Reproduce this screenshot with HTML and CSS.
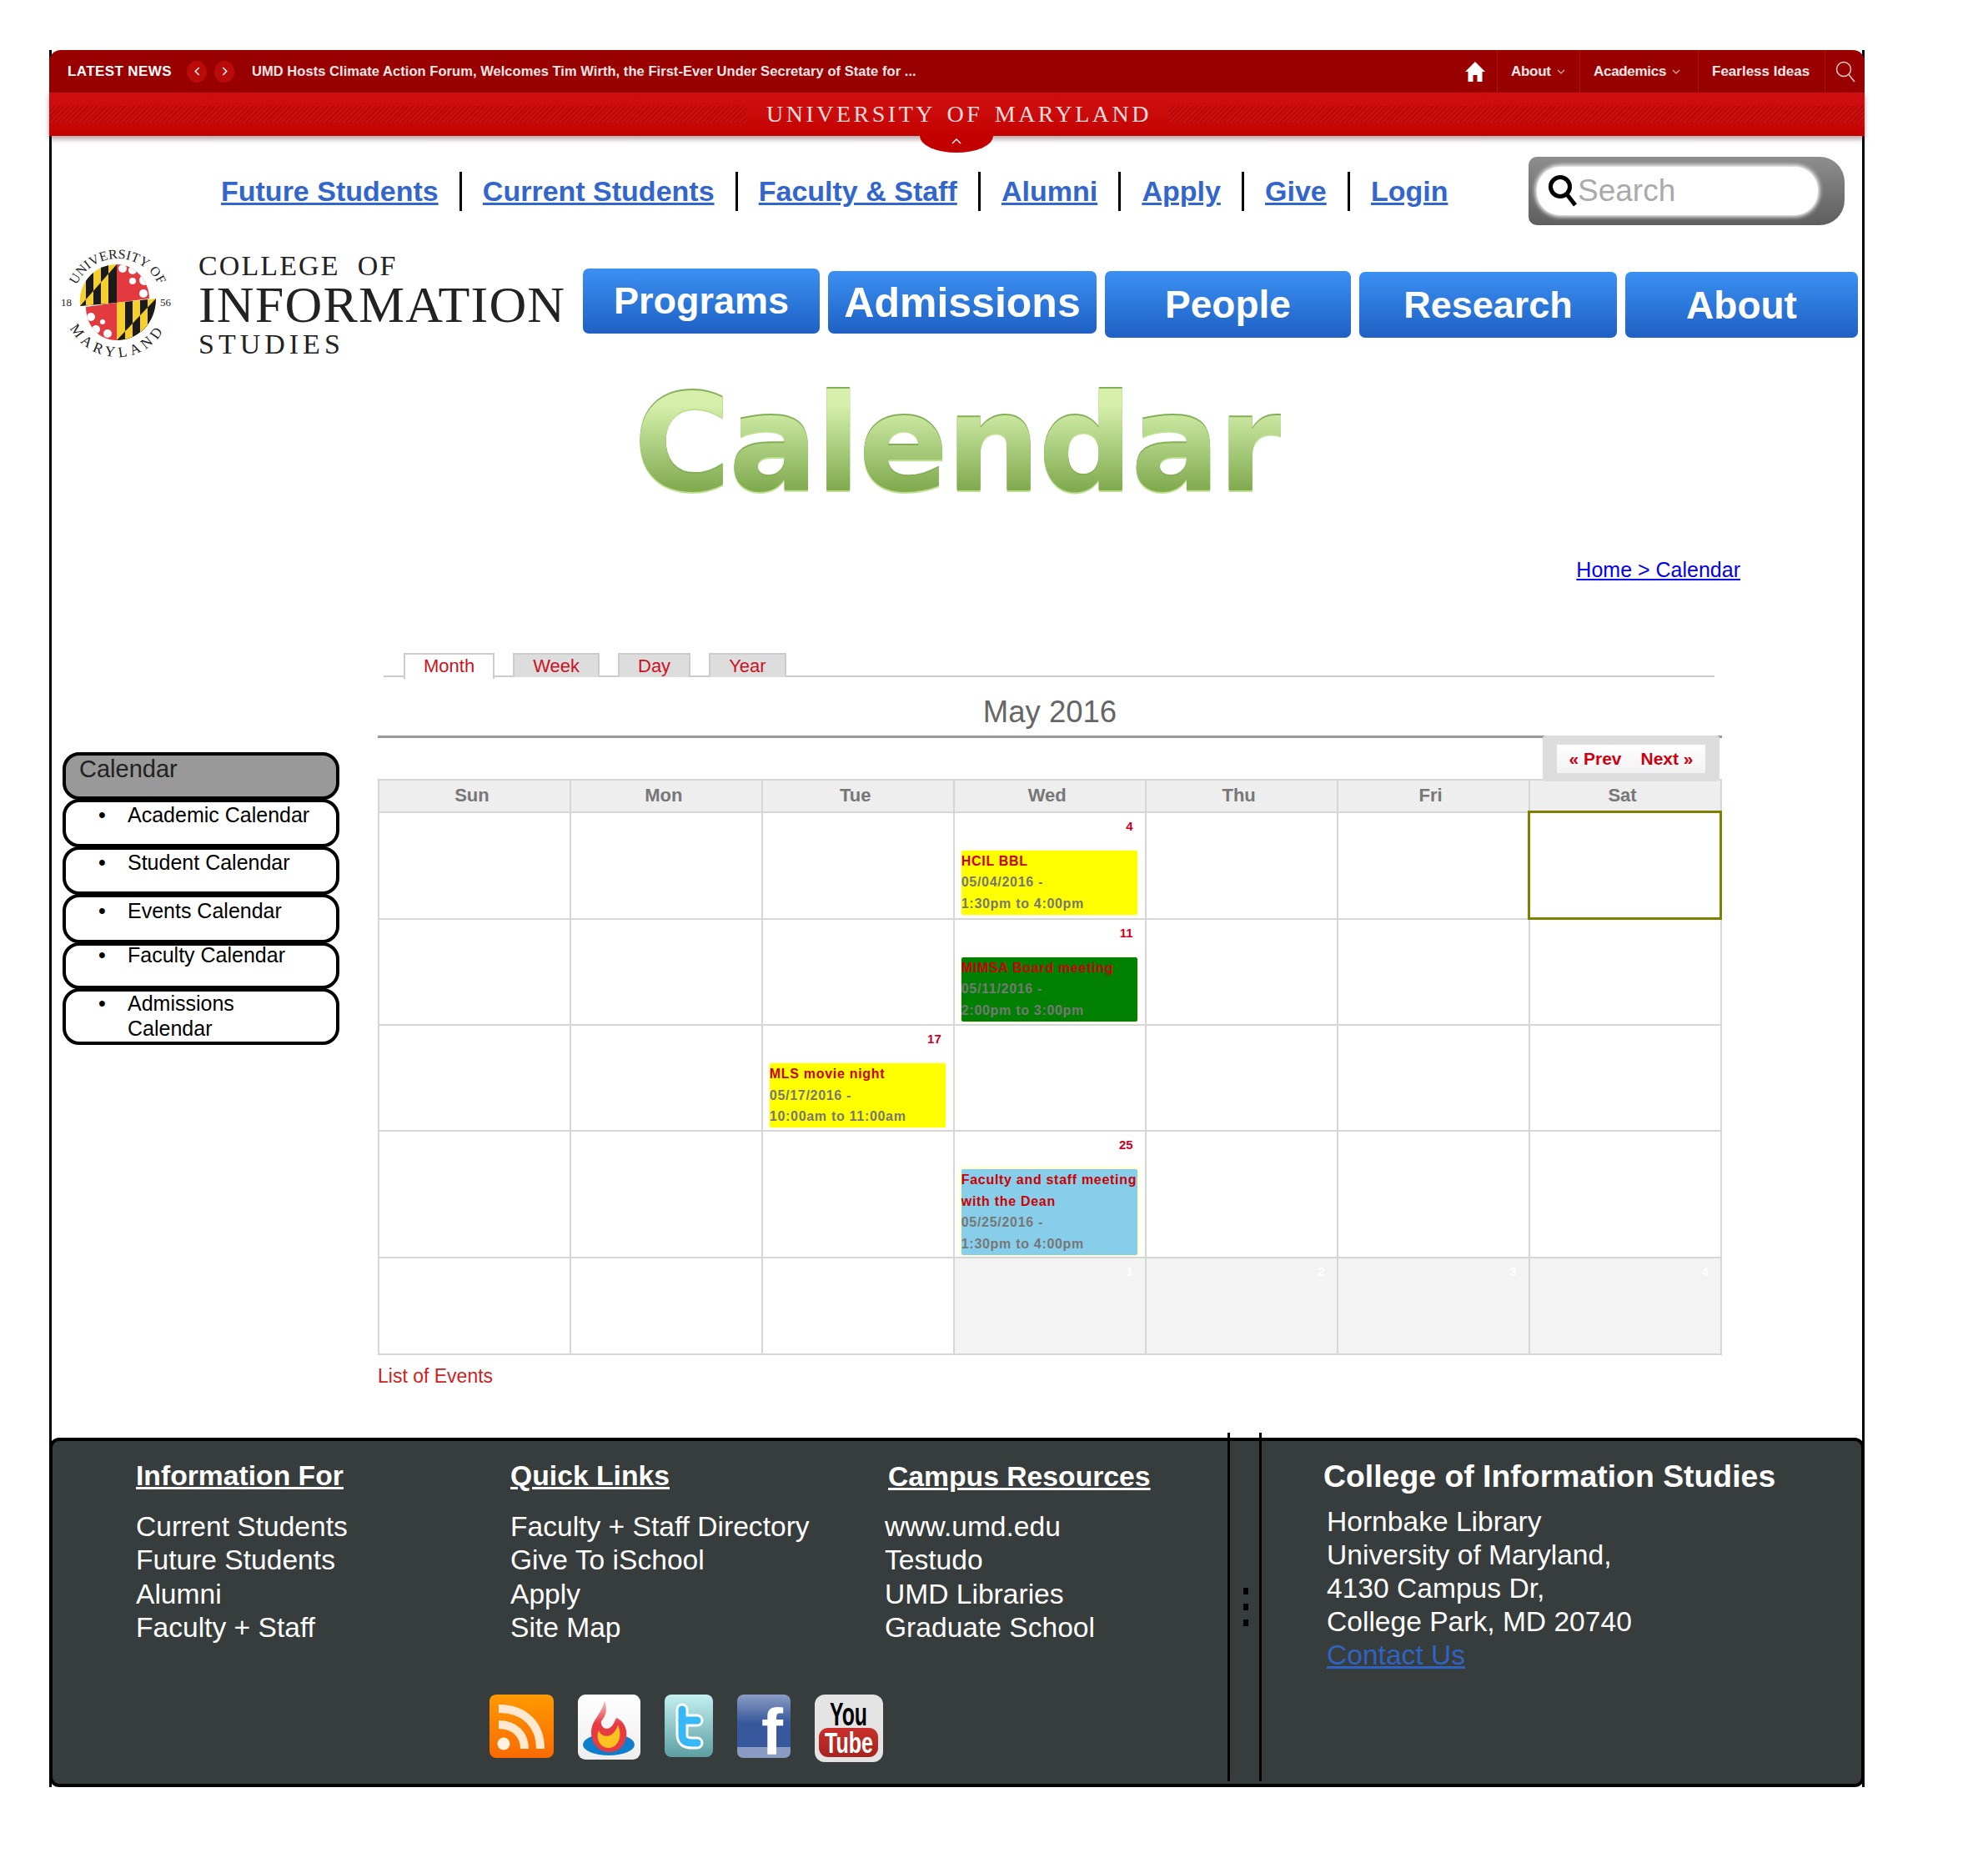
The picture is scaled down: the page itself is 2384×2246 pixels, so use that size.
FILE: index.html
```html
<!DOCTYPE html>
<html lang="en">
<head>
    <meta charset="UTF-8">
    <meta name="viewport" content="width=device-width, initial-scale=1.0">
    <title>Calendar - College of Information Studies</title>
    <link rel="stylesheet" href="styles.css">
</head>
<body>
    <div class="page">
        <div class="umd-header">
            <div class="topbar">
                <span class="news-label">LATEST NEWS</span>
                <span class="news-arrow">
                    <svg viewBox="0 0 10 14" width="9" height="13"><path d="M7.5 2 L2.5 7 L7.5 12" fill="none" stroke="#fff" stroke-width="1.6"/></svg>
                </span>
                <span class="news-arrow">
                    <svg viewBox="0 0 10 14" width="9" height="13"><path d="M2.5 2 L7.5 7 L2.5 12" fill="none" stroke="#fff" stroke-width="1.6"/></svg>
                </span>
                <span class="news-text">UMD Hosts Climate Action Forum, Welcomes Tim Wirth, the First-Ever Under Secretary of State for ...</span>
                <div class="top-nav">
                    <span class="top-home">
                        <svg viewBox="0 0 24 24" width="24" height="24"><path d="M12 0 L24 12 L20.5 12 L20.5 24 L14.5 24 L14.5 16 L9.5 16 L9.5 24 L3.5 24 L3.5 12 L0 12 Z" fill="#fff"/></svg>
                    </span>
                    <span class="top-item top-about">About
                        <svg viewBox="0 0 10 6" width="10" height="6"><path d="M1 1 L5 5 L9 1" fill="none" stroke="#e8b0b0" stroke-width="1.2"/></svg>
                    </span>
                    <span class="top-item top-academics">Academics
                        <svg viewBox="0 0 10 6" width="10" height="6"><path d="M1 1 L5 5 L9 1" fill="none" stroke="#e8b0b0" stroke-width="1.2"/></svg>
                    </span>
                    <span class="top-item top-fearless">Fearless Ideas</span>
                    <span class="top-item top-search">
                        <svg viewBox="0 0 24 26" width="24" height="26"><circle cx="10" cy="10" r="8.5" fill="none" stroke="#f0c8c8" stroke-width="1.5"/><path d="M16 16.5 L23 25" stroke="#f0c8c8" stroke-width="1.5"/></svg>
                    </span>
                </div>
            </div>
            <div class="band">
                <div class="stripes"></div>
                <div class="band-title">UNIVERSITY OF MARYLAND</div>
                <div class="stripes"></div>
            </div>
            <div class="band-tab">
                <svg viewBox="0 0 12 7" width="12" height="7"><path d="M1 6 L6 1 L11 6" fill="none" stroke="#fff" stroke-width="1.4"/></svg>
            </div>
        </div>

        <div class="link-row">
            <a href="#">Future Students</a>
            <a href="#">Current Students</a>
            <a href="#">Faculty &amp; Staff</a>
            <a href="#">Alumni</a>
            <a href="#">Apply</a>
            <a href="#">Give</a>
            <a href="#">Login</a>
            <div class="search-box">
                <div class="search-inner">
                    <svg viewBox="0 0 36 40" width="36" height="40"><circle cx="15" cy="15" r="11.5" fill="none" stroke="#000" stroke-width="5"/><path d="M23 24 L33 37" stroke="#000" stroke-width="5"/></svg>
                    <span class="search-hint">Search</span>
                </div>
            </div>
        </div>

        <div class="brand-row">
            <svg class="seal" viewBox="0 0 137 130" width="137" height="130">
                <defs>
                    <clipPath id="top-left"><path d="M23 69 C20 40 42 19 67 19 L67 65 Z"/></clipPath>
                    <clipPath id="top-right"><path d="M67 19 C90 19 106 40 106 60 L67 65 Z"/></clipPath>
                    <clipPath id="bot-left"><path d="M30 70 L67 65 L67 110 C45 110 30 92 30 70 Z"/></clipPath>
                    <clipPath id="bot-right"><path d="M67 65 L114 60 C114 90 92 110 67 110 Z"/></clipPath>
                    <clipPath id="top-diag"><path d="M23 69 L67 19 L67 69 Z"/></clipPath>
                    <clipPath id="bot-diag"><path d="M67 110 L114 60 L114 110 Z"/></clipPath>
                    <path id="arc-top" d="M14 66 A54 54 0 0 1 122 66"/>
                    <path id="arc-bot" d="M4 66 A64 64 0 0 0 132 66"/>
                </defs>
                <g clip-path="url(#top-left)">
                    <rect x="20" y="15" width="50" height="60" fill="#f6cf2e"/>
                    <rect x="30" y="15" width="9" height="60" fill="#1b1b1b"/>
                    <rect x="48" y="15" width="9" height="60" fill="#1b1b1b"/>
                    <g clip-path="url(#top-diag)">
                        <rect x="20" y="15" width="50" height="60" fill="#1b1b1b"/>
                        <rect x="30" y="15" width="9" height="60" fill="#f6cf2e"/>
                        <rect x="48" y="15" width="9" height="60" fill="#f6cf2e"/>
                    </g>
                </g>
                <g clip-path="url(#top-right)">
                    <rect x="67" y="15" width="42" height="55" fill="#e23a3f"/>
                    <circle cx="74" cy="24" r="5" fill="#fff"/><circle cx="86" cy="26" r="5" fill="#fff"/>
                    <circle cx="100" cy="38" r="6" fill="#fff"/><circle cx="86" cy="39" r="4" fill="#fff"/>
                    <circle cx="99" cy="54" r="5" fill="#fff"/>
                </g>
                <g clip-path="url(#bot-left)">
                    <rect x="28" y="60" width="40" height="55" fill="#e23a3f"/>
                    <circle cx="36" cy="82" r="5" fill="#fff"/><circle cx="42" cy="97" r="5" fill="#fff"/>
                    <circle cx="56" cy="102" r="5" fill="#fff"/><circle cx="50" cy="88" r="3" fill="#fff"/>
                </g>
                <g clip-path="url(#bot-right)">
                    <rect x="67" y="58" width="50" height="55" fill="#f6cf2e"/>
                    <rect x="77" y="58" width="9" height="55" fill="#1b1b1b"/>
                    <rect x="95" y="58" width="9" height="55" fill="#1b1b1b"/>
                    <g clip-path="url(#bot-diag)">
                        <rect x="67" y="58" width="50" height="55" fill="#1b1b1b"/>
                        <rect x="77" y="58" width="9" height="55" fill="#f6cf2e"/>
                        <rect x="95" y="58" width="9" height="55" fill="#f6cf2e"/>
                    </g>
                </g>
                <text class="seal-text"><textPath href="#arc-top" startOffset="50%" text-anchor="middle">UNIVERSITY OF</textPath></text>
                <text class="seal-text seal-bottom"><textPath href="#arc-bot" startOffset="50%" text-anchor="middle">MARYLAND</textPath></text>
                <text class="seal-year" x="0" y="69">18</text>
                <text class="seal-year" x="119" y="69">56</text>
            </svg>
            <div class="brand-name">
                <div class="brand-small">COLLEGE&nbsp; OF</div>
                <div class="brand-large">INFORMATION</div>
                <div class="brand-small brand-last">STUDIES</div>
            </div>
            <div class="main-nav">
                <a class="nav-btn nav-programs" href="#">Programs</a>
                <a class="nav-btn nav-admissions" href="#">Admissions</a>
                <a class="nav-btn nav-people" href="#">People</a>
                <a class="nav-btn nav-research" href="#">Research</a>
                <a class="nav-btn nav-about" href="#">About</a>
            </div>
        </div>

        <h1 class="page-title"><span>Calendar</span></h1>
        <div class="breadcrumb"><a href="#">Home &gt; Calendar</a></div>

        <div class="content">
            <div class="sidebar">
                <div class="side-head">Calendar</div>
                <div class="side-item side-1"><ul><li>Academic Calendar</li></ul></div>
                <div class="side-item side-2"><ul><li>Student Calendar</li></ul></div>
                <div class="side-item side-3"><ul><li>Events Calendar</li></ul></div>
                <div class="side-item side-4"><ul><li>Faculty Calendar</li></ul></div>
                <div class="side-item side-5"><ul><li>Admissions Calendar</li></ul></div>
            </div>

            <div class="calendar">
                <div class="tabs">
                    <a class="tab active" href="#">Month</a>
                    <a class="tab" href="#">Week</a>
                    <a class="tab" href="#">Day</a>
                    <a class="tab" href="#">Year</a>
                </div>
                <h2 class="month-title">May 2016</h2>
                <div class="pager">
                    <div class="pager-inner"><a href="#">&laquo; Prev</a><a href="#">Next &raquo;</a></div>
                </div>
                <table class="cal-table">
                    <thead>
                        <tr><th>Sun</th><th>Mon</th><th>Tue</th><th>Wed</th><th>Thu</th><th>Fri</th><th>Sat</th></tr>
                    </thead>
                    <tbody>
                        <tr class="row-std">
                            <td></td><td></td><td></td>
                            <td>
                                <div class="day-num">4</div>
                                <div class="event ev-yellow">
                                    <div class="ev-title">HCIL BBL</div>
                                    <div>05/04/2016 -</div>
                                    <div>1:30pm to 4:00pm</div>
                                </div>
                            </td>
                            <td></td><td></td><td class="today"></td>
                        </tr>
                        <tr class="row-std">
                            <td></td><td></td><td></td>
                            <td>
                                <div class="day-num">11</div>
                                <div class="event ev-green">
                                    <div class="ev-title">MIMSA Board meeting</div>
                                    <div>05/11/2016 -</div>
                                    <div>2:00pm to 3:00pm</div>
                                </div>
                            </td>
                            <td></td><td></td><td></td>
                        </tr>
                        <tr class="row-std">
                            <td></td><td></td>
                            <td>
                                <div class="day-num">17</div>
                                <div class="event ev-yellow">
                                    <div class="ev-title">MLS movie night</div>
                                    <div>05/17/2016 -</div>
                                    <div>10:00am to 11:00am</div>
                                </div>
                            </td>
                            <td></td><td></td><td></td><td></td>
                        </tr>
                        <tr class="row-tall">
                            <td></td><td></td><td></td>
                            <td>
                                <div class="day-num">25</div>
                                <div class="event ev-blue">
                                    <div class="ev-title">Faculty and staff meeting with the Dean</div>
                                    <div>05/25/2016 -</div>
                                    <div>1:30pm to 4:00pm</div>
                                </div>
                            </td>
                            <td></td><td></td><td></td>
                        </tr>
                        <tr class="row-last">
                            <td></td><td></td><td></td>
                            <td class="other"><div class="day-num">1</div></td>
                            <td class="other"><div class="day-num">2</div></td>
                            <td class="other"><div class="day-num">3</div></td>
                            <td class="other"><div class="day-num">4</div></td>
                        </tr>
                    </tbody>
                </table>
                <a class="list-events" href="#">List of Events</a>
            </div>
        </div>

        <div class="footer">
            <div class="foot-left">
                <div class="foot-cols">
                    <div class="foot-col col-info">
                        <h3>Information For</h3>
                        <div>Current Students</div>
                        <div>Future Students</div>
                        <div>Alumni</div>
                        <div>Faculty + Staff</div>
                    </div>
                    <div class="foot-col col-quick">
                        <h3>Quick Links</h3>
                        <div>Faculty + Staff Directory</div>
                        <div>Give To iSchool</div>
                        <div>Apply</div>
                        <div>Site Map</div>
                    </div>
                    <div class="foot-col col-campus">
                        <h3>Campus Resources</h3>
                        <div>www.umd.edu</div>
                        <div>Testudo</div>
                        <div>UMD Libraries</div>
                        <div>Graduate School</div>
                    </div>
                </div>
                <div class="social">
                    <svg viewBox="0 0 77 76" width="77" height="76">
                        <defs><linearGradient id="rss-bg" x1="0" y1="0" x2="0" y2="1"><stop offset="0" stop-color="#ff9a00"/><stop offset="1" stop-color="#fb6a00"/></linearGradient></defs>
                        <rect width="77" height="76" rx="8" fill="url(#rss-bg)"/>
                        <circle cx="17" cy="59" r="7.5" fill="#fff2e0"/>
                        <path d="M11 36 C30 36 42 48 42 65" fill="none" stroke="#ffe8d0" stroke-width="10"/>
                        <path d="M11 17 C43 17 61 37 61 65" fill="none" stroke="#ffe8d0" stroke-width="10"/>
                    </svg>
                    <svg viewBox="0 0 75 78" width="75" height="78">
                        <defs>
                            <linearGradient id="fb-bg" x1="0" y1="0" x2="0" y2="1"><stop offset="0" stop-color="#fff"/><stop offset="1" stop-color="#eee"/></linearGradient>
                            <linearGradient id="flame" x1="0" y1="0" x2="0" y2="1"><stop offset="0" stop-color="#f6c0c0"/><stop offset=".45" stop-color="#e83a42"/></linearGradient>
                        </defs>
                        <rect width="75" height="78" rx="9" fill="url(#fb-bg)"/>
                        <ellipse cx="37" cy="60" rx="31" ry="13" fill="#0d7ecb"/>
                        <path d="M32 7 C36 20 33 26 28 32 C27 36 30 41 35 41 C41 40 43 35 46 28 C56 32 61 44 57 55 C53 66 44 70 36 69 C24 68 16 58 16 46 C16 30 29 24 32 7 Z" fill="url(#flame)"/>
                        <path d="M25 43 C28 52 42 54 48 37 C53 46 51 63 37 64 C26 64 21 52 25 43 Z" fill="#fcc21f"/>
                    </svg>
                    <svg viewBox="0 0 58 77" width="58" height="77">
                        <defs><linearGradient id="tw-bg" x1="0" y1="0" x2="0" y2="1"><stop offset="0" stop-color="#c4f0f0"/><stop offset="1" stop-color="#5d9fa3"/></linearGradient></defs>
                        <rect width="58" height="75" rx="8" fill="url(#tw-bg)"/>
                        <path d="M21 18 L21 48 C21 56 26 58 33 58 L39 58" fill="none" stroke="#fff" stroke-width="15" stroke-linecap="round"/>
                        <path d="M21 31 L39 31" fill="none" stroke="#fff" stroke-width="15" stroke-linecap="round"/>
                        <path d="M21 18 L21 48 C21 56 26 58 33 58 L39 58" fill="none" stroke="#35b8f5" stroke-width="9" stroke-linecap="round"/>
                        <path d="M21 31 L39 31" fill="none" stroke="#35b8f5" stroke-width="9" stroke-linecap="round"/>
                    </svg>
                    <svg viewBox="0 0 64 76" width="64" height="76">
                        <defs><linearGradient id="fa-bg" x1="0" y1="0" x2="0" y2="1"><stop offset="0" stop-color="#8b9cc4"/><stop offset=".45" stop-color="#37589c"/><stop offset="1" stop-color="#37589c"/></linearGradient></defs>
                        <rect width="64" height="76" rx="8" fill="url(#fa-bg)"/>
                        <path d="M0 63 L64 63 L64 68 Q64 76 56 76 L8 76 Q0 76 0 68 Z" fill="#8b9cc4"/>
                        <text class="fb-letter" x="29" y="72">f</text>
                    </svg>
                    <svg viewBox="0 0 82 81" width="82" height="81">
                        <defs><linearGradient id="yt-red" x1="0" y1="0" x2="0" y2="1"><stop offset="0" stop-color="#c9302b"/><stop offset="1" stop-color="#a5241f"/></linearGradient></defs>
                        <rect width="82" height="81" rx="12" fill="#e4e4e4"/>
                        <text class="yt-you" x="18" y="37" textLength="45" lengthAdjust="spacingAndGlyphs">You</text>
                        <rect x="5" y="40" width="71" height="35" rx="11" fill="url(#yt-red)"/>
                        <text class="yt-tube" x="12" y="70" textLength="58" lengthAdjust="spacingAndGlyphs">Tube</text>
                    </svg>
                </div>
            </div>
            <div class="foot-right">
                <h3>College of Information Studies</h3>
                <div>Hornbake Library</div>
                <div>University of Maryland,</div>
                <div>4130 Campus Dr,</div>
                <div>College Park, MD 20740</div>
                <a href="#">Contact Us</a>
            </div>
            <div class="splitter splitter-a"></div>
            <div class="splitter splitter-b"></div>
            <div class="splitter-dots"><i></i><i></i><i></i></div>
        </div>
    </div>
</body>
</html>
```

FILE: styles.css
```css
body {
    margin: 0;
    background: #fff;
    font-family: "Liberation Sans", Arial, sans-serif;
    color: #000;
}
svg {
    overflow: visible;
}
.page {
    width: 2171px;
    margin: 60px 0 84px 59px;
    border-left: 3px solid #000;
    border-right: 3px solid #000;
}

/* umd red header */
.umd-header {
    position: relative;
    margin: 0 -3px;
}
.topbar {
    display: flex;
    align-items: center;
    height: 51px;
    padding-left: 22px;
    background: #990000;
    border-radius: 14px 14px 0 0;
    color: #fff;
    font-size: 17px;
}
.news-label {
    font-weight: bold;
    width: 143px;
    letter-spacing: 0.4px;
}
.news-arrow {
    display: flex;
    align-items: center;
    justify-content: center;
    width: 24px;
    height: 26px;
    margin-right: 9px;
    border-radius: 50%;
    background: #bb0a0a;
}
.news-text {
    margin-left: 12px;
    font-weight: bold;
    font-size: 16.5px;
    letter-spacing: 0.05px;
    color: #f6e6e6;
}
.top-nav {
    display: flex;
    align-items: center;
    height: 100%;
    margin-left: auto;
}
.top-home {
    display: flex;
    width: 38px;
}
.top-item {
    display: flex;
    align-items: center;
    gap: 7px;
    height: 100%;
    padding-left: 16px;
    border-left: 1px solid #ac1515;
    box-sizing: border-box;
    font-weight: bold;
    font-size: 17px;
    letter-spacing: -0.3px;
    color: #f6e6e6;
}
.top-about { width: 99px; }
.top-academics { width: 142px; }
.top-fearless { width: 152px; letter-spacing: 0; }
.top-search { width: 48px; padding-left: 12px; }
.band {
    display: flex;
    align-items: center;
    height: 52px;
    background: linear-gradient(to bottom, #cf0f0f, #cb0b0b 50%, #c20000);
    box-shadow: 0 4px 6px rgba(90, 60, 60, 0.45);
}
.stripes {
    flex: 1;
    height: 20px;
    background: repeating-linear-gradient(135deg, #b80808 0, #b80808 2px, #cc1010 2px, #cc1010 4px);
}
.band-title {
    width: 506px;
    padding-left: 5px;
    box-sizing: border-box;
    text-align: center;
    font-family: "Liberation Serif", "Times New Roman", serif;
    font-size: 28px;
    letter-spacing: 3.5px;
    word-spacing: 4px;
    color: #f8dcdc;
}
.band-tab {
    position: absolute;
    left: 1044px;
    top: 103px;
    display: flex;
    justify-content: center;
    width: 88px;
    height: 20px;
    padding-top: 3px;
    box-sizing: border-box;
    background: #c20000;
    border-radius: 0 0 50% 50% / 0 0 100% 100%;
}

/* link row */
.link-row {
    display: flex;
    align-items: center;
    height: 82px;
    padding: 25px 21px 0 203px;
}
.link-row a {
    font-size: 34px;
    font-weight: bold;
    color: #3366cc;
    padding: 0 25.1px;
    line-height: 47px;
    border-left: 3px solid #000;
}
.link-row a:first-child {
    border-left: none;
    padding-left: 0;
}
.search-box {
    display: flex;
    align-items: center;
    width: 379px;
    height: 82px;
    margin-left: auto;
    padding-left: 10px;
    box-sizing: border-box;
    background: linear-gradient(to bottom, #8e8e8e, #5e5e5e);
    border-radius: 10px 30px 30px 10px;
}
.search-inner {
    display: flex;
    align-items: center;
    width: 337px;
    height: 58px;
    padding-left: 13px;
    box-sizing: border-box;
    background: #fff;
    border-radius: 28px;
    box-shadow: 0 0 5px 2px #fff;
}
.search-hint {
    font-size: 37px;
    color: #aaa;
}

/* logo + big buttons */
.brand-row {
    display: flex;
    align-items: flex-start;
    height: 130px;
    margin-top: 28px;
    padding-left: 11px;
}
.seal {
    flex: none;
}
.seal-text {
    font-family: "Liberation Serif", serif;
    font-size: 16px;
    letter-spacing: 0.3px;
    fill: #222;
}
.seal-bottom {
    font-size: 17.5px;
    letter-spacing: 5px;
}
.seal-year {
    font-family: "Liberation Serif", serif;
    font-size: 13px;
    fill: #222;
}
.brand-name {
    width: 461px;
    margin-left: 28px;
    font-family: "Liberation Serif", "Times New Roman", serif;
    color: #222;
}
.brand-small {
    font-size: 34px;
    line-height: 32px;
    margin-top: 5px;
    letter-spacing: 2.1px;
}
.brand-large {
    font-size: 62px;
    line-height: 60px;
    letter-spacing: 1.2px;
}
.brand-last {
    margin-top: 2px;
    letter-spacing: 5px;
}
.main-nav {
    display: flex;
    align-items: flex-start;
    gap: 10px;
}
.nav-btn {
    display: flex;
    align-items: center;
    justify-content: center;
    box-sizing: border-box;
    border-radius: 7px;
    background: linear-gradient(to bottom, #3b90f2, #1f60c4);
    color: #fff;
    font-weight: bold;
    font-size: 46px;
    text-decoration: none;
}
.nav-programs { width: 284px; height: 78px; margin-top: 24px; font-size: 45px; }
.nav-admissions { width: 322px; height: 75px; margin-top: 27px; font-size: 50px; }
.nav-people { width: 295px; height: 80px; margin-top: 27px; }
.nav-research { width: 309px; height: 79px; margin-top: 28px; font-size: 45px; }
.nav-about { width: 279px; height: 79px; margin-top: 28px; }

/* page title */
.page-title {
    margin: 10px 0 0;
    text-align: center;
    font-family: "DejaVu Sans", sans-serif;
    font-size: 160px;
    line-height: 190px;
    font-weight: bold;
    letter-spacing: -3.5px;
}
.page-title span {
    display: inline-block;
    background: linear-gradient(to bottom, #d6efab 25%, #b4d68a 45%, #82ab50 78%);
    -webkit-background-clip: text;
    background-clip: text;
    color: transparent;
    filter: drop-shadow(0 -2px 0 #84b055) drop-shadow(0 2px 0 #bde08f);
}
.breadcrumb {
    margin-top: 40px;
    padding-right: 146px;
    text-align: right;
    font-size: 25px;
    line-height: 30px;
}
.breadcrumb a {
    color: #0000ee;
}

/* sidebar + calendar */
.content {
    display: flex;
    align-items: flex-start;
    margin-top: 85px;
    padding: 0 0 59px 13px;
}
.sidebar {
    width: 332px;
    margin-top: 119px;
    margin-right: 46px;
}
.side-head {
    height: 57px;
    padding: 0 0 0 16px;
    box-sizing: border-box;
    background: #999;
    border: 4px solid #000;
    border-radius: 20px;
    font-size: 29px;
    line-height: 32px;
    color: #222;
}
.side-item {
    box-sizing: border-box;
    background: #fff;
    border: 4px solid #000;
    border-radius: 20px;
    font-size: 25px;
    line-height: 30px;
    margin-top: -1px;
}
.side-item ul {
    margin: 0;
    padding: 0 28px 0 74px;
    list-style: none;
}
.side-item li::before {
    content: "\2022";
    display: inline-block;
    width: 30px;
    margin-left: -35px;
    margin-right: 5px;
}
.side-1 { height: 58px; }
.side-2 { height: 58px; }
.side-3 { height: 59px; }
.side-4 { height: 56px; }
.side-5 { height: 68px; }
.side-3 ul { padding-top: 1px; }
.side-4 ul { margin-top: -4px; }
.side-5 ul { margin-top: -1px; }

.calendar {
    position: relative;
    width: 1612px;
}
.tabs {
    display: flex;
    gap: 22px;
    height: 29px;
    width: 1596px;
    padding-left: 24px;
    box-sizing: border-box;
    margin-left: 7px;
    border-bottom: 2px solid #ccc;
}
.tab {
    height: 27px;
    padding: 0 22px;
    background: #ddd;
    border: 2px solid #ccc;
    border-bottom: none;
    font-size: 22px;
    line-height: 28px;
    color: #cc1122;
    text-decoration: none;
}
.tab.active {
    height: 29px;
    background: #fff;
}
.month-title {
    height: 73px;
    margin: 0;
    box-sizing: border-box;
    padding-top: 22px;
    border-bottom: 3px solid #999;
    text-align: center;
    font-size: 36.5px;
    line-height: 40px;
    font-weight: normal;
    color: #666;
}
.pager {
    position: absolute;
    right: 3px;
    top: 99px;
    display: flex;
    align-items: center;
    justify-content: center;
    width: 212px;
    height: 55px;
    background: #ddd;
    border-radius: 4px;
    z-index: 1;
}
.pager-inner {
    display: flex;
    gap: 23px;
    justify-content: center;
    width: 178px;
    height: 34px;
    background: linear-gradient(to bottom, #fff, #f2f2f2);
    font-size: 21px;
    font-weight: bold;
    line-height: 34px;
}
.pager-inner a {
    color: #cc0011;
    text-decoration: none;
}
.cal-table {
    width: 1612px;
    margin-top: 49px;
    table-layout: fixed;
    border-collapse: collapse;
}
.cal-table th, .cal-table td {
    border: 2px solid #d6d6d6;
    padding: 0;
}
.cal-table th {
    height: 36px;
    padding-right: 6px;
    background: #eee;
    font-size: 22px;
    color: #777;
}
.cal-table td {
    vertical-align: top;
}
.row-std td { height: 125px; }
.row-tall td { height: 150px; }
.row-last td { height: 114px; }
.cal-table td.today {
    border: 3px solid #808000;
}
.cal-table td.other {
    background: #f3f3f3;
}
.day-num {
    padding: 7px 14px 0 0;
    height: 18px;
    text-align: right;
    font-size: 15px;
    line-height: 18px;
    font-weight: bold;
    color: #cc0022;
}
.other .day-num {
    color: #fff;
}
.event {
    margin: 20px 9px 0 8px;
    font-size: 16px;
    line-height: 25.7px;
    font-weight: bold;
    letter-spacing: 0.7px;
    color: #777;
    border-radius: 2px;
}
.ev-title {
    color: #cc0000;
}
.ev-yellow { background: #ffff00; box-shadow: 0 0 3px #ffffa0; }
.ev-green { background: #008000; box-shadow: 0 0 3px #ffffa0; }
.ev-blue { background: #87ceeb; box-shadow: 0 0 4px 2px #ffffc0; }
.list-events {
    display: block;
    margin-top: 10px;
    font-size: 23px;
    line-height: 30px;
    color: #cc2222;
    text-decoration: none;
}

/* footer */
.footer {
    position: relative;
    display: flex;
    height: 419px;
    margin: 0 -3px;
    box-sizing: border-box;
    padding-top: 19px;
    background: #373c3c;
    border: 4px solid #000;
    border-radius: 12px;
    color: #fff;
    font-size: 33.6px;
    line-height: 40.4px;
}
.footer h3 {
    margin: 0;
    font-size: 33.7px;
    line-height: 44px;
}
.foot-left {
    width: 1528px;
    flex: none;
}
.foot-cols {
    display: flex;
    height: 285px;
}
.foot-col h3 {
    margin-bottom: 20px;
    text-decoration: underline;
}
.col-info { width: 449px; padding-left: 100px; box-sizing: content-box; }
.col-quick { width: 449px; }
.col-campus h3 { margin: 1px 0 19px 4px; }
.foot-right {
    line-height: 40px;
}
.footer .foot-right h3 {
    margin: 3px 0 15px -4px;
    font-size: 37.4px;
    line-height: 40px;
}
.foot-right a {
    color: #2f63c2;
}
.social {
    display: flex;
    gap: 29px;
    align-items: flex-start;
    padding-left: 524px;
}
.fb-letter {
    font-family: "Liberation Sans", sans-serif;
    font-weight: bold;
    font-size: 78px;
    fill: #fff;
}
.yt-you, .yt-tube {
    font-family: "Liberation Sans", sans-serif;
    font-weight: bold;
}
.yt-you { font-size: 39px; fill: #000; }
.yt-tube { font-size: 35px; fill: #fff; }
.splitter {
    position: absolute;
    top: -10px;
    bottom: 3px;
    width: 3px;
    background: #000;
}
.splitter-a { left: 1409px; }
.splitter-b { left: 1447px; }
.splitter-dots {
    position: absolute;
    left: 1428px;
    top: 176px;
}
.splitter-dots i {
    display: block;
    width: 6px;
    height: 8px;
    margin-bottom: 11px;
    background: #000;
}
```
